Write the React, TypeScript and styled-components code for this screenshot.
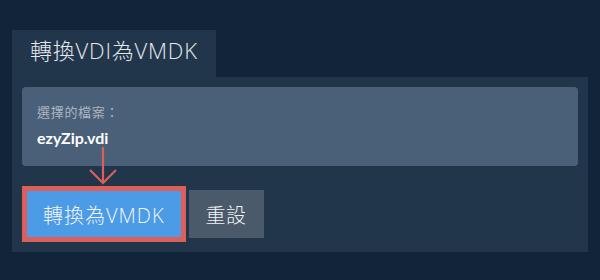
import React from "react";
import styled, { createGlobalStyle } from "styled-components";

const Global = createGlobalStyle`
  html, body { margin: 0; padding: 0; background: #12243a; }
  body { font-family: "Open Sans", "Noto Sans CJK TC", sans-serif; }
`;

const Page = styled.div`
  width: 600px;
  height: 280px;
  box-sizing: border-box;
  padding: 30px 12px 0;
  background: #12243a;
  display: flex;
  flex-direction: column;
  align-items: stretch;
`;

const Tab = styled.div`
  align-self: flex-start;
  background: #22364b;
  color: #e4e9ee;
  font-size: 22px;
  font-weight: 300;
  line-height: 28px;
  height: 47px;
  box-sizing: border-box;
  padding: 6px 18px 0;
  letter-spacing: 0.8px;
`;

const Panel = styled.div`
  background: #22364b;
  padding: 10px 10px 10px;
  position: relative;
`;

const FileBox = styled.div`
  background: #4a5f78;
  border-radius: 4px;
  height: 79px;
  box-sizing: border-box;
  padding: 16px 15px 0;
`;

const Label = styled.div`
  color: #aab6c3;
  font-size: 13px;
  line-height: 18px;
  letter-spacing: 0.7px;
`;

const FileName = styled.div`
  font-family: "Lato", sans-serif;
  color: #ffffff;
  font-size: 16px;
  font-weight: 700;
  line-height: 20px;
  margin-top: 7px;
`;

const Arrow = styled.svg`
  position: absolute;
  left: 76px;
  top: 70px;
`;

const Buttons = styled.div`
  display: flex;
  align-items: center;
  gap: 3px;
  margin-top: 20px;
`;

const Button = styled.button<{ $primary?: boolean }>`
  font-family: "Open Sans", "Noto Sans CJK TC", sans-serif;
  font-size: 20px;
  font-weight: 300;
  color: #f2f5f8;
  border: ${(p) => (p.$primary ? "5px solid #dc5f5b" : "none")};
  background: ${(p) => (p.$primary ? "#4b9be6" : "#4b5a6a")};
  height: ${(p) => (p.$primary ? "56px" : "48px")};
  padding: ${(p) => (p.$primary ? "0 16px" : "0 17px")};
  box-sizing: border-box;
  cursor: pointer;
  letter-spacing: ${(p) => (p.$primary ? "1px" : "0.5px")};
`;

export default function App() {
  return (
    <>
      <Global />
      <Page>
        <Tab>轉換VDI為VMDK</Tab>
        <Panel>
          <FileBox>
            <Label>選擇的檔案：</Label>
            <FileName>ezyZip.vdi</FileName>
          </FileBox>
          <Arrow width="30" height="38" viewBox="0 0 30 38">
            <path d="M15 0 V35 M2 23 L15 36 L28 23" stroke="#dc5f5b" strokeWidth="2.2" fill="none" />
          </Arrow>
          <Buttons>
            <Button $primary>轉換為VMDK</Button>
            <Button>重設</Button>
          </Buttons>
        </Panel>
      </Page>
    </>
  );
}
